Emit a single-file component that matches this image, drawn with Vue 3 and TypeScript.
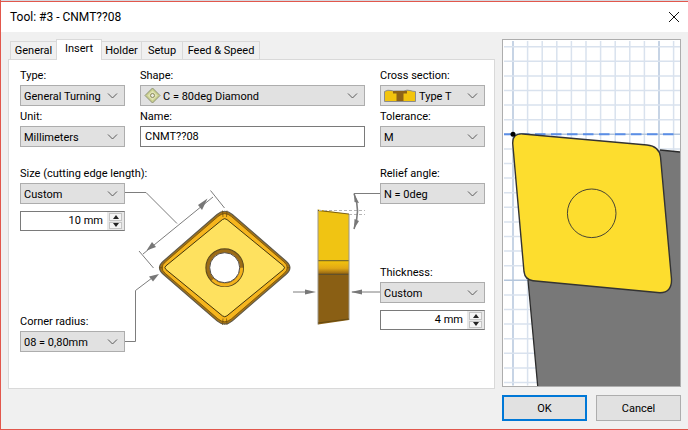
<template>
  <div class="window">
    <div class="desk-edge"></div>
    <header class="titlebar">
      <span>Tool: #3 - CNMT??08</span>
      <svg class="close" width="12" height="12" viewBox="0 0 12 12">
        <path d="M1 1L11 11M11 1L1 11" stroke="#111" stroke-width="1" fill="none" />
      </svg>
    </header>

    <div class="content">
      <section class="left">
        <nav class="tabs">
          <div v-for="t in tabs" :key="t.name" class="tab" :class="{ active: t.name === 'Insert' }" :style="{ width: t.width + 'px' }">
            {{ t.name }}
          </div>
        </nav>

        <div class="panel">
          <div class="top-grid">
            <div class="field">
              <label>Type:</label>
              <div class="combo"><span>General Turning</span><svg class="chev" width="11" height="6" viewBox="0 0 11 6"><path d="M1 .5L5.500 5L10 .5" /></svg></div>
            </div>
            <div class="field">
              <label>Shape:</label>
              <div class="combo">
                <svg class="shape-icon" width="17" height="17" viewBox="0 0 17 17">
                  <path d="M8.500 1L16 8.500L8.500 16L1 8.500Z" fill="#c9cf8d" stroke="#8f9478" />
                  <path d="M8.500 3.500L13.500 8.500L8.500 13.500L3.500 8.500Z" fill="#dfe2b4" />
                  <circle cx="8.500" cy="8.500" r="2" fill="#e9e9e0" stroke="#8a8a5a" />
                </svg>
                <span>C = 80deg Diamond</span>
                <svg class="chev" width="11" height="6" viewBox="0 0 11 6"><path d="M1 .5L5.500 5L10 .5" /></svg>
              </div>
            </div>
            <div class="field">
              <label>Cross section:</label>
              <div class="combo">
                <svg class="cross-icon" width="32" height="13" viewBox="0 0 32 13">
                  <path d="M.5 12.500V2.500Q4 .5 7 1.500T12 2H20Q23 .5 26 1.500T31.500 2.500V12.500Z" fill="#f2c40e" stroke="#8c8c8c" />
                  <path d="M9 2H23V4.500H19.500V12H12.500V4.500H9Z" fill="#8e6418" />
                </svg>
                <span>Type T</span>
                <svg class="chev" width="11" height="6" viewBox="0 0 11 6"><path d="M1 .5L5.500 5L10 .5" /></svg>
              </div>
            </div>
            <div class="field">
              <label>Unit:</label>
              <div class="combo"><span>Millimeters</span><svg class="chev" width="11" height="6" viewBox="0 0 11 6"><path d="M1 .5L5.500 5L10 .5" /></svg></div>
            </div>
            <div class="field">
              <label>Name:</label>
              <div class="textbox">CNMT??08</div>
            </div>
            <div class="field">
              <label>Tolerance:</label>
              <div class="combo"><span>M</span><svg class="chev" width="11" height="6" viewBox="0 0 11 6"><path d="M1 .5L5.500 5L10 .5" /></svg></div>
            </div>
          </div>

          <div class="lower">
            <div class="side">
              <div class="field">
                <label>Size (cutting edge length):</label>
                <div class="combo"><span>Custom</span><svg class="chev" width="11" height="6" viewBox="0 0 11 6"><path d="M1 .5L5.500 5L10 .5" /></svg></div>
                <div class="spin">
                  <span class="spin-value">10 mm</span>
                  <div class="spin-btns">
                    <div class="up"></div>
                    <div class="down"></div>
                  </div>
                </div>
              </div>
              <div class="field">
                <label>Corner radius:</label>
                <div class="combo"><span>08 = 0,80mm</span><svg class="chev" width="11" height="6" viewBox="0 0 11 6"><path d="M1 .5L5.500 5L10 .5" /></svg></div>
              </div>
            </div>

            <svg class="drawing" width="255" height="189" viewBox="125 163 255 189">
              <defs>
                <linearGradient id="chamfer" x1="0" y1="0" x2="0" y2="1">
                  <stop offset="0" stop-color="#f2c40e" />
                  <stop offset="0.55" stop-color="#e2a915" />
                  <stop offset="1" stop-color="#8e6014" />
                </linearGradient>
              </defs>

              <g class="leader">
                <path d="M125 192.500H146L177 223.500" />
                <path d="M143 254L213 197" />
                <path d="M139 251L153.500 268" />
                <path d="M210.500 190.500L224.500 208" />
                <path d="M125 341.500H135.500V290.500L152 278" />
                <path d="M380 193.500H354" />
                <path d="M293 292H310" />
                <path d="M352 292H380" />
              </g>
              <g class="arrowheads">
                <path d="M207.500 198.500L198 205L202 210Z" />
                <path d="M146.500 250.500L152 242L156 247Z" />
                <path d="M159 274L149 276.500L153 281.500Z" />
                <path d="M316 292L305 289.500V294.500Z" />
                <path d="M351 292L362 289.500V294.500Z" />
              </g>

              <!-- insert, top view -->
              <path :d="diamond(69, 59.7, 10)" fill="#a87512" stroke="#5f5a4c" stroke-width="1.2" />
              <path :d="diamond(66, 57, 9)" fill="#f6b51d" stroke="#6b4a0c" stroke-width="0.8" />
              <path :d="diamond(61, 50, 3)" fill="#fee15f" stroke="#2f2506" stroke-width="0.9" />
              <g class="corner-marks">
                <path d="M222.500 210.500L223 217M227 210.500L226.500 217" />
                <path d="M222.500 325L223 318.500M227 325L226.500 318.500" />
                <path d="M163 267.700H159M286.500 267.700H290" />
              </g>
              <circle cx="224.700" cy="267.700" r="18.800" fill="#9c6c16" stroke="#5d4a1c" stroke-width="1.100" />
              <path d="M212.500 279.700A17 17 0 0 0 241.700 267.700" stroke="#f3b21c" stroke-width="3" fill="none" />
              <circle cx="224.700" cy="267.700" r="15" fill="#fff" stroke="#56504a" stroke-width="1" />

              <!-- insert, side view -->
              <path d="M318 209.500L349 214V260.700H318Z" fill="#f0c413" />
              <rect x="318" y="260.700" width="31" height="13.600" fill="url(#chamfer)" />
              <path d="M318 274.300H349V320L318 324.500Z" fill="#8a5f14" />
              <path d="M318 260.700H349M318 274.300H349" stroke="#3f3a20" stroke-width="0.8" />
              <path d="M318 209.500V324.500M349 214V320" stroke="#9a968a" stroke-width="1" />
              <path d="M318 210.500L349 214M318 323L349 319" stroke="#5a4410" stroke-width="0.8" />
              <path d="M319 210.500H365M349 214.500H365" class="dashed" />
              <path d="M354 193.500Q361 210 354 229" class="relief" />
              <path d="M354 193.500L359 203L354.500 202Z M354 229L354.500 219L359 221Z" fill="#777" />
            </svg>

            <div class="side">
              <div class="field">
                <label>Relief angle:</label>
                <div class="combo"><span>N = 0deg</span><svg class="chev" width="11" height="6" viewBox="0 0 11 6"><path d="M1 .5L5.500 5L10 .5" /></svg></div>
              </div>
              <div class="field thickness">
                <label>Thickness:</label>
                <div class="combo"><span>Custom</span><svg class="chev" width="11" height="6" viewBox="0 0 11 6"><path d="M1 .5L5.500 5L10 .5" /></svg></div>
                <div class="spin">
                  <span class="spin-value">4 mm</span>
                  <div class="spin-btns">
                    <div class="up"></div>
                    <div class="down"></div>
                  </div>
                </div>
              </div>
            </div>
          </div>
        </div>
      </section>

      <aside class="right">
        <div class="preview">
          <svg width="177" height="346" viewBox="503 40 177 346">
            <g v-for="x in gridX" :key="'x' + x.pos">
              <line :x1="x.pos" :x2="x.pos" y1="41" y2="385.500" :stroke="x.major ? '#b4c6dc' : '#d9e2ee'" stroke-width="1.500" />
            </g>
            <g v-for="y in gridY" :key="'y' + y.pos">
              <line x1="504" x2="680" :y1="y.pos" :y2="y.pos" :stroke="y.major ? '#b4c6dc' : '#d9e2ee'" stroke-width="1.500" />
            </g>
            <line x1="504" x2="676" y1="134.300" y2="134.300" stroke="#5b8ee6" stroke-width="2" stroke-dasharray="10.500 5.500" stroke-dashoffset="1" />
            <path d="M528 280L537.700 386H680V152L660 150Z" fill="#787878" />
            <path d="M528 280L537.700 386M660 150L680 152" stroke="#2b2b2b" stroke-width="1.300" fill="none" />
            <path d="M523 134L647 145Q659 146 660.500 157L671.500 279Q672 292.500 660 292.700L533 280.700Q525 280 524 271.700L512.700 143.300Q512.500 133 523 134Z" fill="#fddd2e" stroke="#333" stroke-width="1.400" />
            <circle cx="591.700" cy="213.300" r="24.300" fill="none" stroke="#333" stroke-width="0.900" />
            <circle cx="513" cy="134.300" r="2.500" fill="#000" />
          </svg>
        </div>
        <div class="actions">
          <button class="primary">OK</button>
          <button>Cancel</button>
        </div>
      </aside>
    </div>
  </div>
</template>

<script setup lang="ts">
const tabs = [
  { name: 'General', width: 47 },
  { name: 'Insert', width: 46 },
  { name: 'Holder', width: 41 },
  { name: 'Setup', width: 42 },
  { name: 'Feed & Speed', width: 78 },
]

const GRID = 14.6
const gridX = Array.from({ length: 12 }, (_, i) => ({ pos: 513 + GRID * i, major: i % 10 === 0 }))
const gridY = Array.from({ length: 24 }, (_, i) => ({ pos: 134.3 + GRID * (i - 6), major: (i - 6) % 10 === 0 }))

// rounded rhombus round the centre of the top view; r is measured along the edge
function diamond(hw: number, hh: number, r: number): string {
  const cx = 224.7
  const cy = 267.7
  const len = Math.hypot(hw, hh)
  const dx = (hw / len) * r
  const dy = (hh / len) * r
  const n = (v: number) => v.toFixed(1)
  return [
    `M${n(cx - dx)} ${n(cy - hh + dy)}`,
    `Q${n(cx)} ${n(cy - hh)} ${n(cx + dx)} ${n(cy - hh + dy)}`,
    `L${n(cx + hw - dx)} ${n(cy - dy)}`,
    `Q${n(cx + hw)} ${n(cy)} ${n(cx + hw - dx)} ${n(cy + dy)}`,
    `L${n(cx + dx)} ${n(cy + hh - dy)}`,
    `Q${n(cx)} ${n(cy + hh)} ${n(cx - dx)} ${n(cy + hh - dy)}`,
    `L${n(cx - hw + dx)} ${n(cy + dy)}`,
    `Q${n(cx - hw)} ${n(cy)} ${n(cx - hw + dx)} ${n(cy - dy)}`,
    'Z',
  ].join('')
}
</script>

<style>
html,
body {
  margin: 0;
  background: #fff;
}
</style>

<style scoped>
.window {
  width: 688px;
  height: 430px;
  box-sizing: border-box;
  display: flex;
  flex-direction: column;
  border-left: 1px solid #e2574c;
  border-bottom: 1px solid #e2574c;
  background: #f0f0f0;
  font-family: Roboto, "Noto Sans", sans-serif;
  font-size: 11px;
  color: #000;
  overflow: hidden;
}

.desk-edge {
  height: 1px;
  background: #d5d9e0;
}

.titlebar {
  height: 31px;
  flex: none;
  box-sizing: border-box;
  padding: 0 9px;
  display: flex;
  align-items: center;
  justify-content: space-between;
  border-top: 1px solid #e2574c;
  background: #fff;
  font-size: 12px;
}

.close {
  margin-right: -1px;
}

.content {
  flex: 1;
  display: flex;
  gap: 7px;
  padding: 7px 7px 0;
}

.left {
  width: 487px;
  flex: none;
}

.tabs {
  display: flex;
  align-items: flex-end;
  height: 20px;
  padding-left: 2px;
}

.tab {
  height: 18px;
  box-sizing: border-box;
  border: 1px solid #d9d9d9;
  border-bottom: none;
  margin-right: -1px;
  text-align: center;
  line-height: 18px;
  background: #f0f0f0;
  white-space: nowrap;
}

.tab.active {
  position: relative;
  z-index: 1;
  height: 21px;
  margin-bottom: -1px;
  background: #fff;
  line-height: 17px;
}

.panel {
  height: 330px;
  box-sizing: border-box;
  border: 1px solid #d9d9d9;
  background: #fff;
  padding: 5px 0 0 11px;
}

.top-grid {
  display: grid;
  grid-template-columns: 105px 225px 105px;
  column-gap: 15px;
}

.field {
  display: flex;
  flex-direction: column;
}

.field label {
  height: 20px;
  line-height: 21px;
  white-space: nowrap;
}

.combo {
  height: 21px;
  box-sizing: border-box;
  border: 1px solid #adadad;
  background: #e1e1e1;
  display: flex;
  align-items: center;
  padding: 0 6px 0 3px;
  white-space: nowrap;
}

.combo span {
  flex: 1;
  padding-top: 1px;
}

.chev {
  flex: none;
}

.chev path {
  fill: none;
  stroke: #5a5a5a;
  stroke-width: 1;
}

.shape-icon {
  flex: none;
  margin-right: 2px;
}

.cross-icon {
  flex: none;
  margin-right: 3px;
}

.textbox {
  height: 21px;
  box-sizing: border-box;
  border: 1px solid #7a7a7a;
  background: #fff;
  line-height: 19px;
  padding-left: 4px;
}

.lower {
  display: flex;
  margin-top: 16px;
  height: 189px;
}

.side {
  width: 105px;
  flex: none;
  display: flex;
  flex-direction: column;
  justify-content: space-between;
}

.drawing {
  flex: none;
  overflow: visible;
}

.thickness {
  margin-bottom: 22px;
}

.spin {
  height: 20px;
  margin-top: 7px;
  box-sizing: border-box;
  display: flex;
  background: #fff;
  border: 1px solid #7a7a7a;
  border-right-color: #adadad;
}

.spin-value {
  flex: 1;
  text-align: right;
  line-height: 18px;
  padding-right: 4px;
}

.spin-btns {
  width: 17px;
  flex: none;
  box-sizing: border-box;
  padding: 1px 2px;
  background: #e8e8e8;
  display: flex;
  flex-direction: column;
  gap: 1px;
}

.spin-btns div {
  flex: 1;
  border: 1px solid #c4c4c4;
  background: #f4f4f4;
  position: relative;
}

.spin-btns div::after {
  content: "";
  position: absolute;
  left: 50%;
  top: 50%;
  margin: -2px 0 0 -3px;
  border-left: 3px solid transparent;
  border-right: 3px solid transparent;
}

.spin-btns .up::after {
  border-bottom: 4px solid #222;
}

.spin-btns .down::after {
  border-top: 4px solid #222;
}

.leader path {
  fill: none;
  stroke: #7d7d7d;
  stroke-width: 1;
}

.arrowheads path {
  fill: #777;
}

.corner-marks path {
  fill: none;
  stroke: #6b4a0c;
  stroke-width: 0.7;
}

.dashed {
  fill: none;
  stroke: #b5b5b5;
  stroke-width: 1;
  stroke-dasharray: 3 2;
}

.relief {
  fill: none;
  stroke: #7d7d7d;
  stroke-width: 1.6;
}

.right {
  width: 179px;
  flex: none;
  display: flex;
  flex-direction: column;
}

.preview {
  height: 348px;
  box-sizing: border-box;
  border: 1px solid #adadad;
  background: #fff;
}

.preview svg {
  display: block;
}

.actions {
  display: flex;
  justify-content: space-between;
  margin-top: 8px;
}

.actions button {
  width: 85px;
  height: 26px;
  box-sizing: border-box;
  border: 1px solid #adadad;
  background: #e1e1e1;
  font: inherit;
  color: #000;
  padding: 0;
}

.actions button.primary {
  border: 2px solid #0078d7;
}
</style>
